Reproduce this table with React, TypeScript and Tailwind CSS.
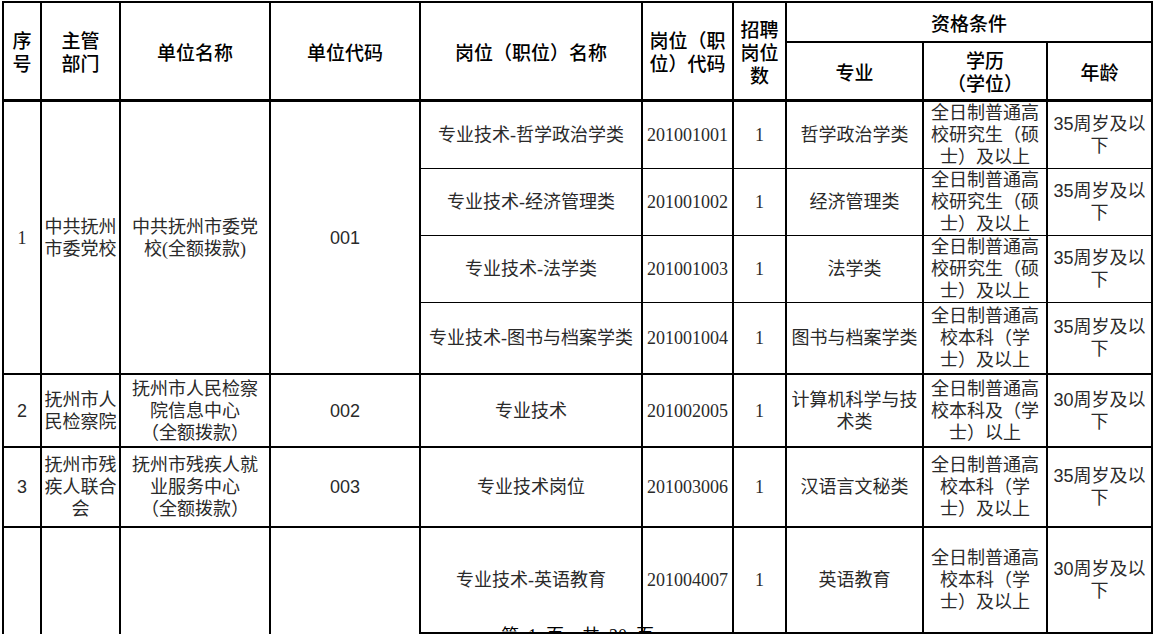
import React from "react";

interface Job {
  title: string;
  code: string;
  count: string;
  major: string;
  edu: string;
  age: string;
}

const head = "font-['Noto_Sans_CJK_SC',sans-serif] font-medium text-[19px] leading-[23px] text-black";
const body = "font-['Liberation_Serif','Noto_Sans_CJK_SC',serif] text-[18px] leading-[22px] text-[#2a2a2a]";
const sans = "font-['Liberation_Sans','Noto_Sans_CJK_SC',sans-serif] text-[18px] leading-[22px] text-[#2a2a2a]";
const cell = "border-r-2 border-black p-0 text-center align-middle whitespace-pre-line";

const EDU_MASTER = "全日制普通高\n校研究生（硕\n士）及以上";
const EDU_BACH = "全日制普通高\n校本科（学\n士）及以上";

const group1: Job[] = [
  { title: "专业技术-哲学政治学类", code: "201001001", count: "1", major: "哲学政治学类", edu: EDU_MASTER, age: "35周岁及以\n下" },
  { title: "专业技术-经济管理类", code: "201001002", count: "1", major: "经济管理类", edu: EDU_MASTER, age: "35周岁及以\n下" },
  { title: "专业技术-法学类", code: "201001003", count: "1", major: "法学类", edu: EDU_MASTER, age: "35周岁及以\n下" },
  { title: "专业技术-图书与档案学类", code: "201001004", count: "1", major: "图书与档案学类", edu: EDU_BACH, age: "35周岁及以\n下" },
];

const JobCells: React.FC<{ job: Job; bottom: string }> = ({ job, bottom }) => (
  <>
    <td className={`${cell} ${bottom} ${body}`}>{job.title}</td>
    <td className={`${cell} ${bottom} ${body}`}>{job.code}</td>
    <td className={`${cell} ${bottom} ${body}`}>{job.count}</td>
    <td className={`${cell} ${bottom} ${body}`}>{job.major}</td>
    <td className={`${cell} ${bottom} ${body}`}>{job.edu}</td>
    <td className={`${cell} ${bottom} ${sans}`}>{job.age}</td>
  </>
);

export default function App() {
  return (
    <div className="relative h-[634px] w-[1154px] overflow-hidden bg-white">
      <table className="ml-[2px] mt-[1px] w-[1151px] table-fixed border-separate border-spacing-0 border-l-2 border-t-2 border-black">
        <colgroup>
          <col className="w-[38px]" />
          <col className="w-[79px]" />
          <col className="w-[150px]" />
          <col className="w-[150px]" />
          <col className="w-[222px]" />
          <col className="w-[91px]" />
          <col className="w-[53px]" />
          <col className="w-[137px]" />
          <col className="w-[124px]" />
          <col className="w-[105px]" />
        </colgroup>
        <tbody>
          <tr className="h-[40px]">
            <td rowSpan={2} className={`${cell} border-b-[3px] ${head}`}>{"序\n号"}</td>
            <td rowSpan={2} className={`${cell} border-b-[3px] ${head}`}>{"主管\n部门"}</td>
            <td rowSpan={2} className={`${cell} border-b-[3px] ${head}`}>单位名称</td>
            <td rowSpan={2} className={`${cell} border-b-[3px] ${head}`}>单位代码</td>
            <td rowSpan={2} className={`${cell} border-b-[3px] ${head}`}>岗位（职位）名称</td>
            <td rowSpan={2} className={`${cell} border-b-[3px] ${head}`}>{"岗位（职\n位）代码"}</td>
            <td rowSpan={2} className={`${cell} border-b-[3px] ${head}`}>{"招聘\n岗位\n数"}</td>
            <td colSpan={3} className={`${cell} border-b-2 ${head}`}>资格条件</td>
          </tr>
          <tr className="h-[59px]">
            <td className={`${cell} border-b-[3px] ${head}`}>专业</td>
            <td className={`${cell} border-b-[3px] ${head}`}>{"学历\n（学位）"}</td>
            <td className={`${cell} border-b-[3px] ${head}`}>年龄</td>
          </tr>

          {group1.map((job, i) => (
            <tr key={job.code} className={i === 3 ? "h-[72px]" : "h-[66px]"}>
              {i === 0 && (
                <>
                  <td rowSpan={4} className={`${cell} border-b-2 ${body}`}>1</td>
                  <td rowSpan={4} className={`${cell} border-b-2 ${body}`}>{"中共抚州\n市委党校"}</td>
                  <td rowSpan={4} className={`${cell} border-b-2 ${body}`}>{"中共抚州市委党\n校(全额拨款)"}</td>
                  <td rowSpan={4} className={`${cell} border-b-2 ${sans}`}>001</td>
                </>
              )}
              <JobCells job={job} bottom={i === 3 ? "border-b-2" : "border-b"} />
            </tr>
          ))}

          <tr className="h-[73px]">
            <td className={`${cell} border-b-2 ${sans}`}>2</td>
            <td className={`${cell} border-b-2 ${body}`}>{"抚州市人\n民检察院"}</td>
            <td className={`${cell} border-b-2 ${body}`}>{"抚州市人民检察\n院信息中心\n（全额拨款）"}</td>
            <td className={`${cell} border-b-2 ${sans}`}>002</td>
            <JobCells
              job={{ title: "专业技术", code: "201002005", count: "1", major: "计算机科学与技\n术类", edu: "全日制普通高\n校本科及（学\n士）以上", age: "30周岁及以\n下" }}
              bottom="border-b-2"
            />
          </tr>

          <tr className="h-[80px]">
            <td className={`${cell} border-b-2 ${sans}`}>3</td>
            <td className={`${cell} border-b-2 ${body}`}>{"抚州市残\n疾人联合\n会"}</td>
            <td className={`${cell} border-b-2 ${body}`}>{"抚州市残疾人就\n业服务中心\n（全额拨款）"}</td>
            <td className={`${cell} border-b-2 ${sans}`}>003</td>
            <JobCells
              job={{ title: "专业技术岗位", code: "201003006", count: "1", major: "汉语言文秘类", edu: EDU_BACH, age: "35周岁及以\n下" }}
              bottom="border-b-2"
            />
          </tr>

          <tr className="h-[106px]">
            <td rowSpan={2} className={`${cell} ${body}`}></td>
            <td rowSpan={2} className={`${cell} ${body}`}></td>
            <td rowSpan={2} className={`${cell} ${body}`}></td>
            <td rowSpan={2} className={`${cell} ${body}`}></td>
            <JobCells
              job={{ title: "专业技术-英语教育", code: "201004007", count: "1", major: "英语教育", edu: EDU_BACH, age: "30周岁及以\n下" }}
              bottom="border-b-2"
            />
          </tr>
          <tr className="h-[100px]">
            <td className={cell}></td>
            <td className={cell}></td>
            <td className={cell}></td>
            <td className={cell}></td>
            <td className={cell}></td>
            <td className={cell}></td>
          </tr>
        </tbody>
      </table>

      {/* page footer printed over the sheet */}
      <div className="absolute left-[2px] top-[625px] w-[1151px] text-center font-['Liberation_Serif','Noto_Sans_CJK_SC',serif] text-[18px] leading-[22px] whitespace-pre text-black">
        {"第  1  页    共  20  页"}
      </div>
    </div>
  );
}
